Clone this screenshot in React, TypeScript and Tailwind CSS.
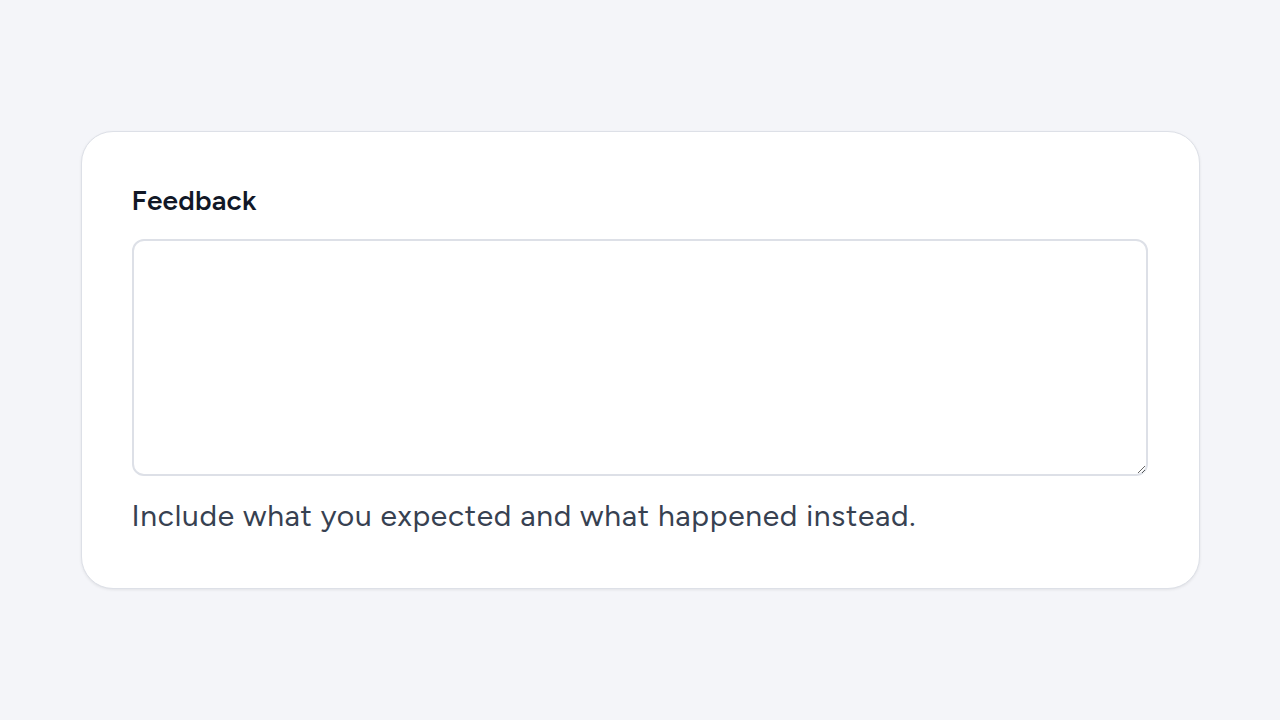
import React from "react";

export default function App() {
  return (
    <div className="min-h-screen w-full bg-[#f4f5f9] flex items-center justify-center" style={{ fontFamily: "Figtree, Inter, 'Noto Sans', sans-serif" }}>
      <div className="w-[1119px] rounded-[32px] border border-[#dde0e7] bg-white shadow-[0_1px_3px_rgba(0,0,0,0.08)] pl-[50px] pr-[51px] pt-[50px] pb-[52px]">
        <label htmlFor="fb" className="block text-[28px] leading-[36px] font-semibold tracking-[0.2px] text-[#111827]">
          Feedback
        </label>
        <textarea
          id="fb"
          className="mt-[21px] block w-full h-[237px] rounded-[12px] border-2 border-[#dde0e7] bg-white outline-none"
        />
        <p className="mt-[20px] text-[30px] leading-[40px] tracking-[0.7px] text-[#374151]">
          Include what you expected and what happened instead.
        </p>
      </div>
    </div>
  );
}
